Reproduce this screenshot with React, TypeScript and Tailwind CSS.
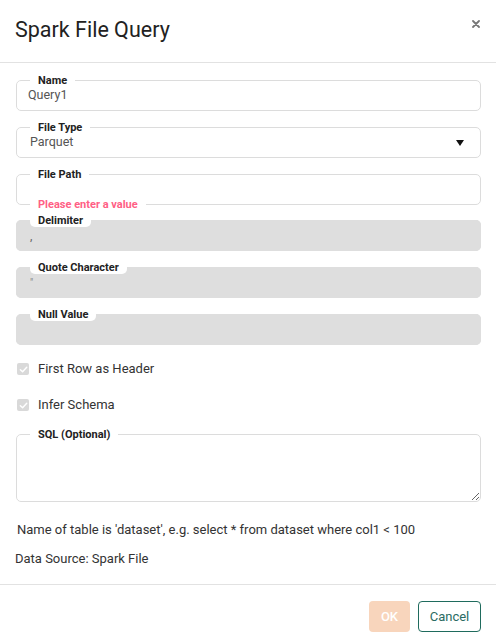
import type { ReactNode } from "react";

const Field = ({ label, grey, className, children }: { label: string; grey?: boolean; className?: string; children: ReactNode }) => (
  <fieldset
    className={`rounded-[5px] border ${grey ? "border-[#dedede] bg-[#dedede]" : "border-[#dcdcdc] bg-white"} ${className ?? ""}`}
  >
    <legend className="ml-[13px] rounded-[5px] bg-white px-[8px] text-[11px] font-bold leading-[13px] text-[#222]">
      {label}
    </legend>
    {children}
  </fieldset>
);

const CheckRow = ({ label, className }: { label: string; className?: string }) => (
  <label className={`flex h-[20px] items-center gap-[9px] pl-[1px] ${className ?? ""}`}>
    <span className="flex h-[12px] w-[12px] items-center justify-center rounded-[2px] bg-[#d9d9d9]">
      <svg width="9" height="9" viewBox="0 0 10 10" fill="none">
        <path d="M1.5 5.2 4 7.6 8.6 2.6" stroke="#fff" strokeWidth="1.6" strokeLinecap="round" strokeLinejoin="round" />
      </svg>
    </span>
    <span className="text-[13px] text-[#333]">{label}</span>
  </label>
);

const App = () => {
  return (
    <div className="flex h-[641px] w-[496px] flex-col bg-white font-['Roboto',sans-serif] text-[#222]">
      <div className="flex h-[63px] items-center justify-between border-b border-[#e2e2e2] pl-[15px] pr-[14px]">
        <h1 className="-mt-[2px] text-[21.5px] font-normal leading-none text-[#222]">Spark File Query</h1>
        <button className="-mt-[14px] flex h-[12px] w-[12px] items-center justify-center">
          <svg width="8" height="8" viewBox="0 0 8 8">
            <path d="M1 1 7 7M7 1 1 7" stroke="#777" strokeWidth="1.8" strokeLinecap="round" />
          </svg>
        </button>
      </div>

      <div className="flex flex-1 flex-col pl-[16px] pr-[15px] pt-[11px]">
        <Field label="Name">
          <div className="-mt-[6px] flex h-[29px] items-center px-[11px] text-[12.5px] text-[#555]">Query1</div>
        </Field>

        <Field label="File Type" className="mt-[10px]">
          <div className="-mt-[6px] flex h-[29px] items-center justify-between pl-[13px] pr-[16px] text-[12.5px] text-[#555]">
            <span>Parquet</span>
            <svg width="8" height="6" viewBox="0 0 8 6">
              <path d="M0 0h8L4 6z" fill="#111" />
            </svg>
          </div>
        </Field>

        <Field label="File Path" className="mt-[10px]">
          <div className="-mt-[6px] h-[29px]" />
        </Field>
        <div className="relative -mt-[7px] ml-[14px] h-[13px] w-fit bg-white px-[8px] text-[11px] font-bold leading-[13px] text-[#ff5f85]">
          Please enter a value
        </div>

        <Field label="Delimiter" grey className="mt-[3px]">
          <div className="-mt-[6px] flex h-[29px] items-center px-[13px] text-[12px] text-[#666]">,</div>
        </Field>

        <Field label="Quote Character" grey className="mt-[10px]">
          <div className="-mt-[6px] flex h-[29px] items-start pt-[7px] px-[13px] text-[10px] text-[#888]">"</div>
        </Field>

        <Field label="Null Value" grey className="mt-[10px]">
          <div className="-mt-[6px] h-[29px]" />
        </Field>

        <CheckRow label="First Row as Header" className="mt-[14px]" />
        <CheckRow label="Infer Schema" className="mt-[16px]" />

        <Field label="SQL (Optional)" className="mt-[13px]">
          <textarea className="-mt-[6px] block h-[66px] w-full resize-y rounded-[5px] bg-transparent px-[11px] text-[12.5px] outline-none" />
        </Field>

        <p className="mt-[20px] pl-[1px] text-[13px] leading-[16px] text-[#333]">
          Name of table is 'dataset', e.g. select * from dataset where col1 &lt; 100
        </p>
        <p className="mt-[13px] -ml-[1px] text-[13px] leading-[16px] text-[#333]">Data Source: Spark File</p>
      </div>

      <div className="flex h-[57px] items-start justify-end gap-[8px] border-t border-[#e2e2e2] pr-[15px] pt-[16px]">
        <button className="h-[31px] w-[41px] rounded-[4px] bg-[#f8d5bc] text-[13px] font-medium text-white">OK</button>
        <button className="h-[31px] w-[63px] rounded-[4px] border border-[#1f6b5d] text-[13px] text-[#2a6b62]">Cancel</button>
      </div>
    </div>
  );
};

export default App;
